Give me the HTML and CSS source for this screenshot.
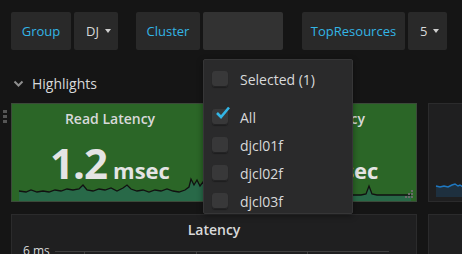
FILE: index.html
```html
<!DOCTYPE html>
<html>
<head>
<meta charset="utf-8">
<link rel="stylesheet" href="styles.css">
</head>
<body>
<div class="bar">
  <div class="btn lbl w-group">Group</div>
  <div class="btn val w-dj">DJ<span class="caret"></span></div>
  <div class="btn lbl w-cluster gap-l">Cluster</div>
  <div class="btn input w-input"></div>
  <div class="btn lbl w-top gap-l2">TopResources</div>
  <div class="btn val w-five">5<span class="caret"></span></div>
</div>

<div class="rowhead">
  <svg class="chev" width="11" height="7" viewBox="0 0 11 7"><path d="M1.5 1.5 L5.5 5.5 L9.5 1.5" fill="none" stroke="#8e8e8e" stroke-width="2"/></svg>
  <span class="rowtitle">Highlights</span>
</div>

<div class="panels">
  <div class="handle"><i></i><i></i><i></i></div>
  <div class="panel green p1">
    <div class="ptitle">Read Latency</div>
    <div class="value"><span class="big">1.2</span><span class="unit">msec</span></div>
    <svg class="spark" width="198" height="24" viewBox="0 0 198 24" preserveAspectRatio="none">
      <path class="sfill" d="M7 14 L14 15 L19 13 L25 15 L31 14 L37 15 L43 13 L49 14 L55 12 L61 13 L67 12 L71 8 L75 13 L81 14 L87 12 L93 13 L99 11 L105 14 L111 11 L115 8 L119 12 L125 14 L131 13 L137 15 L143 13 L149 14 L155 12 L161 14 L167 15 L173 13 L177 10 L179 2 L182 8 L185 3 L188 9 L191 5 L194 8 L198 4 L198 24 L7 24 Z"/>
      <path class="sline" d="M7 14 L14 15 L19 13 L25 15 L31 14 L37 15 L43 13 L49 14 L55 12 L61 13 L67 12 L71 8 L75 13 L81 14 L87 12 L93 13 L99 11 L105 14 L111 11 L115 8 L119 12 L125 14 L131 13 L137 15 L143 13 L149 14 L155 12 L161 14 L167 15 L173 13 L177 10 L179 2 L182 8 L185 3 L188 9 L191 5 L194 8 L198 4"/>
    </svg>
  </div>
  <div class="panel green p2">
    <div class="ptitle">Write Latency</div>
    <div class="value"><span class="big">1.4</span><span class="unit">msec</span></div>
    <svg class="spark" width="197" height="24" viewBox="0 0 197 24" preserveAspectRatio="none">
      <path class="sfill" d="M0 18 L140 18 L145 17 L148 9 L151 17 L156 18 L190 18 L190 24 L0 24 Z"/>
      <path class="sline" d="M0 18 L140 18 L145 17 L148 9 L151 17 L156 18 L190 18"/>
    </svg>
    <svg class="grip" width="10" height="10" viewBox="0 0 10 10"><g fill="#6a6a6a"><rect x="7" y="0" width="2" height="2"/><rect x="4" y="3" width="2" height="2"/><rect x="7" y="3" width="2" height="2"/><rect x="1" y="6" width="2" height="2"/><rect x="4" y="6" width="2" height="2"/><rect x="7" y="6" width="2" height="2"/></g></svg>
  </div>
  <div class="panel dark p3">
    <svg class="spark3" width="34" height="14" viewBox="0 0 34 14" preserveAspectRatio="none">
      <path class="bfill" d="M7 3 L11 4 L15 3 L19 4 L23 2 L26 1 L29 3 L31 2 L34 4 L34 14 L7 14 Z"/>
      <path class="bline" d="M7 3 L11 4 L15 3 L19 4 L23 2 L26 1 L29 3 L31 2 L34 4"/>
    </svg>
  </div>
</div>

<div class="panels2">
  <div class="panel dark p4">
    <div class="ptitle t4">Latency</div>
    <div class="axis">
      <span class="ylab">6 ms</span>
      <div class="grid">
        <div class="hline"></div>
        <div class="vl v1"></div>
        <div class="vl v2"></div>
        <div class="vl v3"></div>
      </div>
    </div>
  </div>
  <div class="panel dark p5"></div>
</div>

<div class="dropdown">
  <div class="opt first"><span class="cb"></span><span>Selected (1)</span></div>
  <div class="opt sep"><span class="cb on"><svg class="tick" width="16" height="13" viewBox="0 0 16 13"><path d="M2 7 L6 11 L14 1.5" fill="none" stroke="#33b5e5" stroke-width="2.6"/></svg></span><span>All</span></div>
  <div class="opt"><span class="cb"></span><span>djcl01f</span></div>
  <div class="opt"><span class="cb"></span><span>djcl02f</span></div>
  <div class="opt"><span class="cb"></span><span>djcl03f</span></div>
</div>
</body>
</html>
```

FILE: styles.css
```css
html, body {
  margin: 0;
  padding: 0;
  background: #151515;
  width: 462px;
  height: 254px;
  overflow: hidden;
  font-family: "Open Sans", "DejaVu Sans", sans-serif;
  color: #d8d9da;
}

.bar {
  display: flex;
  padding: 12px 0 0 11px;
  height: 38px;
}
.btn {
  height: 38px;
  background: #292929;
  border-radius: 2px;
  display: flex;
  align-items: center;
  justify-content: center;
  font-size: 13px;
  margin-right: 3px;
  box-sizing: border-box;
}
.lbl { color: #33b5e5; }
.val { color: #d8d9da; justify-content: flex-start; padding-left: 12px; }
.w-group { width: 60px; }
.w-dj { width: 44px; }
.w-cluster { width: 64px; }
.w-input { width: 80px; background: #323232; }
.w-top { width: 103px; }
.w-five { width: 39px; }
.gap-l { margin-left: 15px; }
.gap-l2 { margin-left: 16px; }
.caret {
  width: 0; height: 0;
  border-left: 3px solid transparent;
  border-right: 3px solid transparent;
  border-top: 4px solid #cfcfcf;
  margin-left: 6px;
}

.rowhead {
  height: 53px;
  display: flex;
  align-items: center;
  padding-left: 13px;
  box-sizing: border-box;
  padding-top: 14px;
}
.chev { margin-right: 8px; }
.rowtitle { font-size: 14px; color: #d8d9da; }

.panels {
  position: relative;
  display: flex;
  gap: 11px;
  padding-left: 11px;
  height: 99px;
}
.handle {
  position: absolute;
  left: 3px;
  top: 7px;
  display: flex;
  flex-direction: column;
  gap: 2px;
}
.handle i {
  display: block;
  width: 4px;
  height: 3px;
  background: #555;
}
.panel {
  position: relative;
  box-sizing: border-box;
  border: 1px solid #2a2a2a;
  flex: none;
  overflow: hidden;
}
.green {
  background: #2b6627;
  border-color: #3b4a39;
}
.dark { background: #1f1f20; border-color: #2b2b2c; }
.p1 { width: 198px; height: 99px; }
.p2 { width: 197px; height: 99px; }
.p3 { width: 60px; height: 99px; }

.ptitle {
  text-align: center;
  font-size: 14px;
  font-weight: 600;
  line-height: 20px;
  padding-top: 5px;
  color: #d8d9da;
}
.value {
  text-align: center;
  line-height: 46px;
  margin-top: 11px;
  color: #e4e4e4;
  font-weight: 700;
  white-space: nowrap;
}
.big { font-size: 42px; letter-spacing: -1px; }
.unit { font-size: 22px; margin-left: 6px; }

.spark {
  position: absolute;
  left: 0;
  bottom: 0;
}
.sfill { fill: rgba(31, 118, 189, 0.22); stroke: none; }
.sline { fill: none; stroke: #111; stroke-width: 1.3; }
.grip { position: absolute; right: 2px; bottom: 1px; }

.spark3 { position: absolute; left: 0; bottom: 4px; }
.bfill { fill: rgba(31, 118, 189, 0.2); }
.bline { fill: none; stroke: #1f78c1; stroke-width: 1.5; }

.panels2 {
  display: flex;
  gap: 11px;
  padding-left: 11px;
  margin-top: 12px;
}
.p4 { width: 406px; height: 60px; }
.p5 { width: 60px; height: 60px; }
.t4 { padding-top: 5px; }
.axis {
  display: flex;
  align-items: center;
  margin-top: 3px;
  height: 16px;
}
.ylab { font-size: 12px; line-height: 16px; color: #d8d9da; margin-left: 11px; width: 32px; }
.grid {
  position: relative;
  height: 16px;
  width: 334px;
}
.hline { position: absolute; left: 0; right: 0; top: 8px; height: 1px; background: #3f3f3f; }
.vl { position: absolute; top: 8px; width: 1px; height: 12px; background: #3f3f3f; }
.v1 { left: 29px; }
.v2 { left: 141px; }
.v3 { left: 252px; }

.dropdown {
  position: absolute;
  left: 203px;
  top: 59px;
  width: 150px;
  height: 155px;
  box-sizing: border-box;
  background: #2a2a2b;
  border: 1px solid #363637;
  border-radius: 2px;
  padding-top: 5px;
  padding-left: 8px;
  overflow: hidden;
  box-shadow: 0 2px 6px rgba(0,0,0,0.4);
}
.opt {
  height: 28px;
  display: flex;
  align-items: center;
  font-size: 14px;
  color: #d8d9da;
}
.opt.sep { margin-top: 10px; }
.cb {
  position: relative;
  width: 16px;
  height: 16px;
  border-radius: 3px;
  background: #383839;
  box-shadow: inset 0 -1px 0 #232324, 0 1px 1px rgba(0,0,0,0.3);
  margin-right: 12px;
  flex: none;
}
.tick { position: absolute; left: 3px; top: -3px; }
```
